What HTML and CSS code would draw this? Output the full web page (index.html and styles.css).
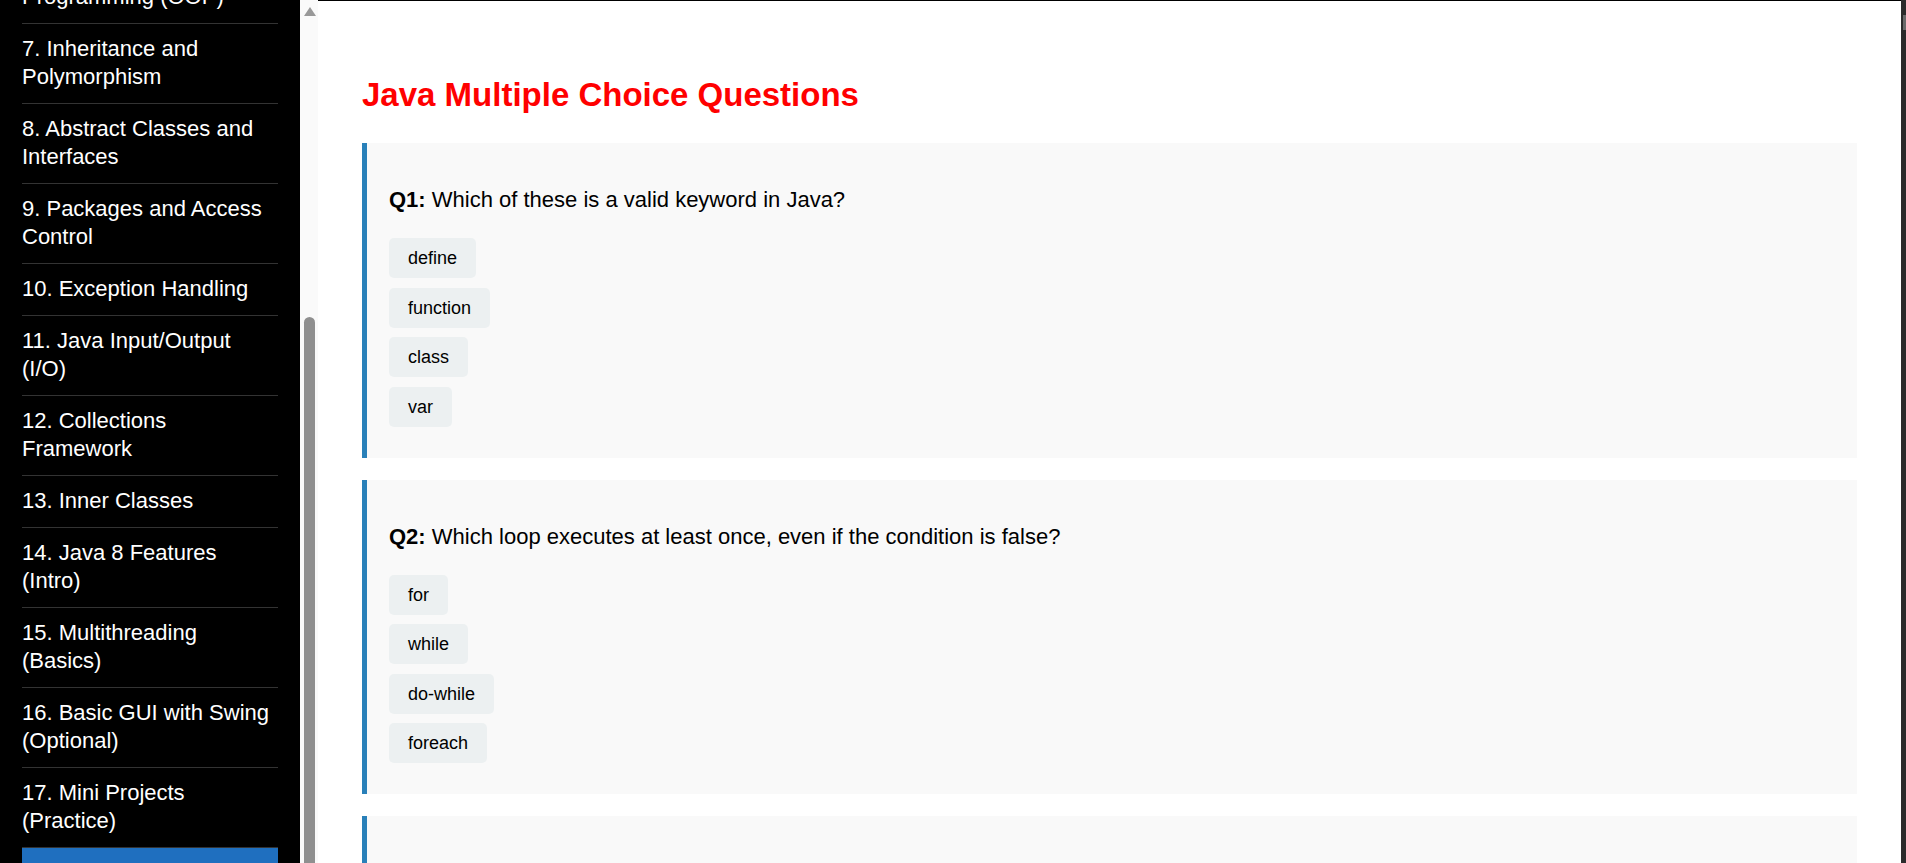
FILE: index.html
```html
<!DOCTYPE html>
<html lang="en">
<head>
<meta charset="utf-8">
<title>Java Multiple Choice Questions</title>
<link rel="stylesheet" href="styles.css">
</head>
<body>
<aside class="sidebar">
  <nav class="nav">
    <a class="nav-item">1. Introduction to Java</a>
    <a class="nav-item">2. Setting Up Java Environment</a>
    <a class="nav-item">3. Java Basics</a>
    <a class="nav-item">4. Control Flow Statements</a>
    <a class="nav-item">5. Methods in Java</a>
    <a class="nav-item">6. Object-Oriented Programming (OOP)</a>
    <a class="nav-item" id="anchor-item">7. Inheritance and Polymorphism</a>
    <a class="nav-item">8. Abstract Classes and Interfaces</a>
    <a class="nav-item">9. Packages and Access Control</a>
    <a class="nav-item">10. Exception Handling</a>
    <a class="nav-item">11. Java Input/Output (I/O)</a>
    <a class="nav-item">12. Collections Framework</a>
    <a class="nav-item">13. Inner Classes</a>
    <a class="nav-item">14. Java 8 Features (Intro)</a>
    <a class="nav-item">15. Multithreading (Basics)</a>
    <a class="nav-item">16. Basic GUI with Swing (Optional)</a>
    <a class="nav-item">17. Mini Projects (Practice)</a>
    <a class="nav-item active">18. Java MCQs</a>
  </nav>
  <div class="rail">
    <span class="rail-arrow"></span>
    <span class="rail-thumb"></span>
  </div>
</aside>
<main class="main">
  <h2 class="title">Java Multiple Choice Questions</h2>
  <section class="card">
    <p class="question"><strong>Q1:</strong> Which of these is a valid keyword in Java?</p>
    <div class="options">
      <button class="option">define</button>
      <button class="option">function</button>
      <button class="option">class</button>
      <button class="option">var</button>
    </div>
  </section>
  <section class="card">
    <p class="question"><strong>Q2:</strong> Which loop executes at least once, even if the condition is false?</p>
    <div class="options">
      <button class="option">for</button>
      <button class="option">while</button>
      <button class="option">do-while</button>
      <button class="option">foreach</button>
    </div>
  </section>
  <section class="card">
    <p class="question"><strong>Q3:</strong> Which of these is not a primitive data type in Java?</p>
    <div class="options">
      <button class="option">int</button>
      <button class="option">float</button>
      <button class="option">String</button>
      <button class="option">char</button>
    </div>
  </section>
</main>
<div class="edge"><span class="edge-mark"></span></div>
<script src="script.js"></script>
</body>
</html>
```
FILE: styles.css
```css
* { box-sizing: border-box; }
html, body { height: 100%; }
body {
  margin: 0;
  display: flex;
  height: 100vh;
  overflow: hidden;
  background: #ffffff;
  font-family: "Liberation Sans", Arial, sans-serif;
  color: #000;
}
.sidebar {
  display: flex;
  flex: 0 0 318px;
  height: 100%;
}
.nav {
  flex: 0 0 300px;
  height: 100%;
  background: #000;
  padding: 0 22px;
  overflow-y: scroll;
  scrollbar-width: none;
  display: flex;
  flex-direction: column;
}
.nav::-webkit-scrollbar { display: none; }
.nav-item {
  display: block;
  flex: none;
  color: #fff;
  font-size: 22px;
  line-height: 28px;
  padding: 11px 0 12px;
  border-bottom: 1px solid #333;
  text-decoration: none;
}
.nav-item.active {
  background: #1f6fbf;
  padding-left: 12px;
}
.rail {
  flex: 0 0 18px;
  background: #fafafa;
  display: flex;
  flex-direction: column;
  align-items: center;
  padding-top: 7px;
}
.rail-arrow {
  width: 0;
  height: 0;
  border-left: 6.5px solid transparent;
  border-right: 6.5px solid transparent;
  border-bottom: 9px solid #999;
  margin-left: 1px;
}
.rail-thumb {
  width: 11px;
  flex: 1;
  margin-top: 301px;
  margin-left: 1px;
  background: #8f8f8f;
  border-radius: 6px 6px 0 0;
}
.main {
  flex: 1;
  min-width: 0;
  height: 100%;
  overflow: hidden;
  border-top: 1px solid #000;
  padding: 75px 44px 0;
}
.title {
  margin: 0 0 29px;
  color: #ff0000;
  font-size: 33px;
  font-weight: bold;
}
.card {
  background: #f9f9f9;
  border-left: 5px solid #2980b9;
  padding: 22px;
  margin-bottom: 22px;
}
.question {
  margin: 22px 0 25px;
  font-size: 22px;
}
.options {
  display: flex;
  flex-direction: column;
  align-items: flex-start;
  gap: 9.5px;
  padding-bottom: 9px;
}
.option {
  font-family: "Liberation Sans", Arial, sans-serif;
  font-size: 18px;
  line-height: 20px;
  padding: 10px 19px;
  height: 40px;
  border: 0;
  border-radius: 5px;
  background: #ecf0f1;
  color: #000;
  cursor: pointer;
}
.edge {
  flex: 0 0 5px;
  background: #2b2b2b;
  display: flex;
  flex-direction: column;
  align-items: flex-end;
  padding-top: 15px;
}
.edge-mark {
  width: 3px;
  height: 15px;
  background: #6a6a6a;
}
```
FILE: script.js
```js
(function () {
  var nav = document.querySelector('.nav');
  var item = document.getElementById('anchor-item');
  if (nav && item) {
    nav.scrollTop += item.getBoundingClientRect().top - 24;
  }
})();
```
